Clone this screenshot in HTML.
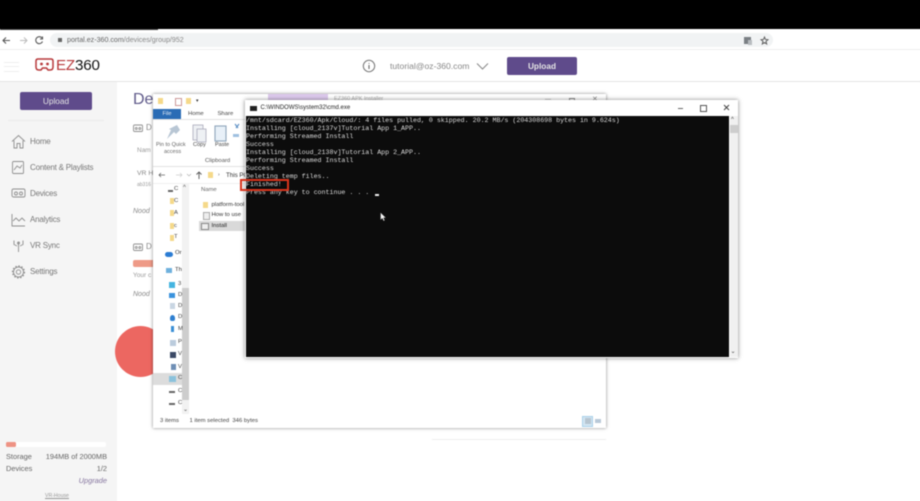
<!DOCTYPE html>
<html><head><meta charset="utf-8"><style>
html,body{margin:0;padding:0;background:#fff;overflow:hidden}
#w{position:relative;width:920px;height:501px;overflow:hidden}
#p{position:absolute;left:0;top:0;width:920px;height:501px;background:#fff;font-family:"Liberation Sans",sans-serif;filter:blur(.5px)}
#p div,#p span.a,#p svg{position:absolute}
.t{white-space:nowrap;line-height:1}
.nav{left:30px;font-size:8px;letter-spacing:-.2px;color:#787878}
.ic{fill:none;stroke:#909090;stroke-width:.9}
.cmd{left:246px;font:6.64px/8px "Liberation Mono",monospace;color:#dcdcdc;white-space:pre}
.ex{font-size:5.900px;color:#444;white-space:nowrap;line-height:1}
.f{background:#f5d98a;width:5px;height:6px}
</style></head><body><div id="w"><div id="p">
<div style="left:-6px;top:-6px;width:932px;height:35px;background:#000"></div>
<div style="left:0;top:29px;width:158px;height:1px;background:#444"></div>
<div style="left:-6px;top:33px;width:932px;height:16px;background:#fff"></div>
<div style="left:50px;top:33px;width:723px;height:14px;background:#f1f3f4;border-radius:7px"></div>
<div style="left:-6px;top:49px;width:932px;height:1px;background:#eee"></div>
<svg style="left:0;top:33px" width="50" height="15" class="ic"><path d="M10 7.500H3M6 4.500L3 7.500 6 10.500" stroke="#555" stroke-width="1.100" fill="none"/><path d="M20 7.500H27M24 4.500L27 7.500 24 10.500" stroke="#bbb" stroke-width="1" fill="none"/><path d="M42 5A3.500 3.500 0 1 0 42.500 8.500M42.500 3.500V6H40" stroke="#555" stroke-width="1.100" fill="none"/></svg>
<div style="left:58px;top:38px;width:3.500px;height:4px;background:#666"></div>
<div class="t" style="left:67px;top:36.500px;font-size:7.100px;color:#666">portal.ez-360.com<span style="color:#888">/devices/group/952</span></div>
<div style="left:744px;top:37px;width:7px;height:7px;background:#7a7f84"></div>
<div style="left:748px;top:40px;width:4px;height:5px;background:#b8bcc0"></div>
<svg style="left:760px;top:36px" width="9" height="9"><path d="M4.500 1L5.500 3.500 8 3.700 6 5.300 6.700 8 4.500 6.500 2.300 8 3 5.300 1 3.700 3.500 3.500Z" fill="none" stroke="#555" stroke-width=".9"/></svg>

<div style="left:-6px;top:81px;width:932px;height:1px;background:#e4e4e4"></div>
<div style="left:4px;top:62px;width:15px;height:8px;border-top:1px solid #eee;border-bottom:1px solid #eee"></div>
<div style="left:4px;top:66px;width:15px;height:1px;background:#eee"></div>
<svg style="left:35px;top:57px" width="19" height="17"><path d="M3 2H16Q18 2 18 4V10Q18 13 15 13H13L11.500 11H7.500L6 13H4Q1 13 1 10V4Q1 2 3 2Z" fill="none" stroke="#b7383a" stroke-width="1.500"/><circle cx="6.500" cy="7" r="1.400" fill="#b7383a"/><circle cx="12.500" cy="7" r="1.400" fill="#b7383a"/></svg>
<div class="t" style="left:56px;top:58px;font-size:15.200px;color:#b7383a;letter-spacing:-.2px">EZ<span style="color:#111">360</span></div>
<svg style="left:362px;top:59px" width="14" height="14"><circle cx="7" cy="7" r="5.700" fill="none" stroke="#777" stroke-width="1"/><path d="M7 4V4.800M7 6V10" stroke="#666" stroke-width="1.100"/></svg>
<div class="t" style="left:390px;top:62px;font-size:8.600px;color:#888">tutorial@oz-360.com</div>
<svg style="left:476px;top:62px" width="13" height="9"><path d="M1 1.500L6.500 7 12 1.500" fill="none" stroke="#888" stroke-width="1"/></svg>
<div class="t" style="left:507px;top:57px;width:70px;height:18px;line-height:18px;background:#5f4b8b;border-radius:2px;color:#e4e4e4;font-size:8.300px;text-align:center;font-weight:bold">Upload</div>

<div style="left:-6px;top:82px;width:123px;height:425px;background:#f5f5f5"></div>
<div class="t" style="left:20px;top:92px;width:72px;height:18px;line-height:18px;background:#5f4b8b;border-radius:2px;color:#e4e4e4;font-size:8.300px;text-align:center">Upload</div>
<div style="left:8px;top:120px;width:96px;height:1px;background:#eaeaea"></div>

<svg style="left:11px;top:134px" width="15" height="15" class="ic"><path d="M1 7.500L7.500 1.500 14 7.500M3 6.500V14H6V9.500H9V14H12V6.500"/></svg>
<div class="t nav" style="top:137.500px">Home</div>
<svg style="left:11px;top:160px" width="15" height="15" class="ic"><rect x="1.500" y="1.500" width="11" height="12" rx="1"/><path d="M3 10L6 6 9 8 11 5"/></svg>
<div class="t nav" style="top:163.500px">Content &amp; Playlists</div>
<svg style="left:11px;top:187px" width="15" height="13" class="ic"><rect x="1" y="2" width="13" height="8" rx="1.500"/><circle cx="5" cy="6.500" r="1.500"/><circle cx="10" cy="6.500" r="1.500"/></svg>
<div class="t nav" style="top:189.500px">Devices</div>
<svg style="left:11px;top:213px" width="15" height="14" class="ic"><path d="M1 1V13H14M2 8L5 5 8 8 11 5 14 8"/></svg>
<div class="t nav" style="top:215.500px">Analytics</div>
<svg style="left:12px;top:239px" width="14" height="14" class="ic"><path d="M6.500 5V13M2 1.500V5.500L5 7M11 1.500V5.500L8 7"/><circle cx="6.500" cy="4" r="1" fill="#999"/></svg>
<div class="t nav" style="top:241.500px">VR Sync</div>
<svg style="left:11px;top:265px" width="15" height="14" class="ic"><circle cx="7.500" cy="7" r="2.200"/><circle cx="7.500" cy="7" r="5"/><circle cx="7.500" cy="7" r="6" stroke-dasharray="1.500 1.600" stroke-width="1.200"/></svg>
<div class="t nav" style="top:267.500px">Settings</div>

<div style="left:6px;top:441.500px;width:100px;height:5px;background:#fff;border-radius:2px"></div>
<div style="left:6px;top:441.500px;width:10px;height:5px;background:#ee9384;border-radius:1.500px"></div>
<div class="t" style="left:6px;top:452.500px;font-size:7.400px;color:#666">Storage</div>
<div class="t" style="right:813px;top:452.500px;font-size:7.400px;color:#666">194MB of 2000MB</div>
<div class="t" style="left:6px;top:464.500px;font-size:7.400px;color:#666">Devices</div>
<div class="t" style="right:813px;top:464.500px;font-size:7.400px;color:#666">1/2</div>
<div class="t" style="right:813px;top:476.500px;font-size:7.400px;color:#84749e;font-style:italic">Upgrade</div>
<div class="t" style="left:45px;top:493.500px;font-size:5.200px;color:#999;text-decoration:underline">VR-House</div>

<div class="t" style="left:133px;top:92px;font-size:16px;color:#5f5a8a">De</div>
<svg style="left:133px;top:124px" width="10" height="9" class="ic"><rect x=".5" y="1" width="9" height="6.500" rx="1"/><circle cx="3.200" cy="4.500" r="1"/><circle cx="6.800" cy="4.500" r="1"/></svg>
<div class="t" style="left:146px;top:124px;font-size:8px;color:#888">D</div>
<div class="t" style="left:137px;top:148px;font-size:6.500px;color:#999">Nam</div>
<div class="t" style="left:137px;top:171px;font-size:6.800px;color:#888">VR H</div>
<div class="t" style="left:137px;top:183px;font-size:5px;color:#999">ab316</div>
<div class="t" style="left:133px;top:208px;font-size:7px;color:#888;font-style:italic">Nood</div>
<svg style="left:133px;top:243px" width="10" height="9" class="ic"><rect x=".5" y="1" width="9" height="6.500" rx="1"/><circle cx="3.200" cy="4.500" r="1"/><circle cx="6.800" cy="4.500" r="1"/></svg>
<div class="t" style="left:146px;top:243px;font-size:8px;color:#888">D</div>
<div style="left:133px;top:260px;width:22px;height:7px;background:#ee9a87;border-radius:2px"></div>
<div class="t" style="left:133px;top:272.500px;font-size:6.500px;color:#999">Your c</div>
<div class="t" style="left:133px;top:291px;font-size:7px;color:#888;font-style:italic">Nood</div>
<div style="left:115px;top:326px;width:51px;height:51px;border-radius:50%;background:#ec6761"></div>
<div style="left:432px;top:439px;width:174px;height:1px;background:#eee"></div>

<!-- Explorer -->
<div style="left:152.500px;top:93.500px;width:453px;height:334px;background:#fff;box-shadow:0 0 3px rgba(0,0,0,.5)"></div>
<div style="left:268px;top:94px;width:60px;height:10px;background:#dcc9ec"></div>
<div class="t" style="left:334px;top:97px;font-size:5.500px;color:#aaa">EZ360 APK Installer</div>
<div class="t" style="left:545px;top:97px;font-size:6px;color:#999">—</div>
<div style="left:569px;top:98px;width:4px;height:4px;border:.7px solid #888"></div>
<div class="t" style="left:592px;top:96px;font-size:7px;color:#888">✕</div>
<div class="f" style="left:158px;top:98px"></div>
<div style="left:175px;top:98px;width:5px;height:6px;border:.7px solid #c99;background:#fff"></div>
<div class="f" style="left:186px;top:98px"></div>
<div class="t" style="left:196px;top:99px;font-size:5px;color:#333">▾</div>
<div class="t" style="left:153px;top:109px;width:28px;height:10px;line-height:10px;background:#2a6cb5;color:#e8eef6;font-size:5.600px;text-align:center">File</div>
<div class="ex" style="left:188px;top:111.500px">Home</div>
<div class="ex" style="left:217.500px;top:111.500px">Share</div>
<div style="left:153px;top:119px;width:92px;height:1px;background:#e2e2e2"></div>
<svg style="left:164px;top:123px" width="80" height="24"><path d="M13 2L16 7 12 11 10 9 3 16 7 7 5 6Z" fill="#b8c6d4"/><rect x="29" y="2" width="10" height="15" fill="#eef1f4" stroke="#aab" stroke-width=".8"/><rect x="33" y="6" width="9" height="13" fill="#eef1f4" stroke="#aab" stroke-width=".8"/><rect x="51" y="3" width="11" height="15" fill="#e8f0f8" stroke="#8fa6bb" stroke-width="1.100"/><path d="M71 1L74 5M75 1L72 5" stroke="#5c8fc4" stroke-width="1.100"/><rect x="69" y="11" width="6" height="3" fill="#9fc0e0"/></svg>
<div class="ex" style="left:156px;top:143px;color:#666;font-size:5.500px">Pin to Quick</div>
<div class="ex" style="left:164px;top:150px;color:#666;font-size:5.500px">access</div>
<div class="ex" style="left:193px;top:143px;font-size:5.500px">Copy</div>
<div class="ex" style="left:215px;top:143px;font-size:5.500px">Paste</div>
<div class="ex" style="left:205px;top:158.500px;color:#555">Clipboard</div>
<div style="left:153px;top:166px;width:92px;height:1px;background:#e2e2e2"></div>
<svg style="left:156px;top:170px" width="50" height="10"><path d="M9 5H3M5 3L3 5 5 7" stroke="#666" stroke-width=".8" fill="none"/><path d="M20 5H26M24 3L26 5 24 7" stroke="#ccc" stroke-width=".7" fill="none"/><path d="M31 4L33 6 35 4" stroke="#aaa" stroke-width=".6" fill="none"/><path d="M43 9V2M40.500 4.500L43 2 45.500 4.500" stroke="#555" stroke-width=".9" fill="none"/></svg>
<div class="f" style="left:208px;top:172px"></div>
<div class="t" style="left:218px;top:173px;font-size:5px;color:#555">›</div>
<div class="t" style="left:226px;top:172.500px;font-size:6.200px;color:#333">This PC</div>
<div style="left:153px;top:183px;width:100px;height:0;border-top:1px solid #f0f0f0"></div>

<div style="left:182px;top:184px;width:7px;height:230px;background:#f2f2f2"></div>
<div style="left:182px;top:288px;width:7px;height:112px;background:#cdcdcd"></div>
<div class="t" style="left:183px;top:185px;font-size:6px;color:#555">^</div>
<div class="t" style="left:183px;top:407px;font-size:6px;color:#555">⌄</div>
<div style="left:153px;top:373px;width:29px;height:12px;background:#dcdcdc"></div>

<div class="ex" style="left:174px;top:187px">C</div><div class="ex" style="left:174px;top:199px">C</div>
<div class="ex" style="left:174px;top:211px">A</div><div class="ex" style="left:174px;top:224px">c</div><div class="ex" style="left:174px;top:235px">T</div>
<div style="left:168px;top:190px;width:5px;height:2px;background:#666"></div>
<div class="f" style="left:170px;top:198px;width:4px"></div><div class="f" style="left:170px;top:210px;width:4px"></div><div class="f" style="left:170px;top:223px;width:4px"></div><div class="f" style="left:170px;top:235px;width:4px"></div>
<div style="left:165px;top:252px;width:8px;height:5px;background:#2b7cd3;border-radius:3px"></div>
<div class="ex" style="left:175px;top:251px;color:#333">Or</div>
<div style="left:166px;top:268px;width:6px;height:5px;background:#6fb1dd"></div>
<div class="ex" style="left:175px;top:268px;color:#333">Th</div>
<div style="left:169px;top:282px;width:6px;height:6px;background:#45b4e0"></div><div class="ex" style="left:178px;top:282px">3</div>
<div style="left:169px;top:293px;width:6px;height:5px;background:#3b93dd"></div><div class="ex" style="left:178px;top:293px">D</div>
<div style="left:170px;top:303px;width:5px;height:6px;background:#c9d6e3"></div><div class="ex" style="left:178px;top:304px">D</div>
<div style="left:170px;top:315px;width:5px;height:6px;background:#2e7fd0;border-radius:50% 50% 2px 2px"></div><div class="ex" style="left:178px;top:315px">D</div>
<div style="left:171px;top:326px;width:3px;height:6px;background:#3a8fd6"></div><div class="ex" style="left:178px;top:327px">M</div>
<div style="left:170px;top:340px;width:6px;height:6px;background:#bcd"></div><div class="ex" style="left:178px;top:340px">P</div>
<div style="left:170px;top:352px;width:6px;height:6px;background:#3c4a66"></div><div class="ex" style="left:178px;top:352px">V</div>
<div style="left:171px;top:364px;width:5px;height:6px;background:#6f8fb5"></div><div class="ex" style="left:178px;top:365px">V</div>
<div style="left:169px;top:376px;width:7px;height:6px;background:#8bc2dc"></div><div class="ex" style="left:178px;top:376px">C</div>
<div style="left:169px;top:391px;width:6px;height:2px;background:#666"></div><div class="ex" style="left:178px;top:389px">C</div>
<div style="left:169px;top:403px;width:6px;height:2px;background:#666"></div><div class="ex" style="left:178px;top:401px">C</div>

<div class="ex" style="left:201px;top:187.500px;color:#666">Name</div>
<div class="f" style="left:203px;top:202px"></div>
<div class="ex" style="left:211.500px;top:202.500px;color:#333">platform-tool</div>
<div style="left:203px;top:212px;width:5px;height:6px;background:#eee;border:.5px solid #aaa"></div>
<div class="ex" style="left:211.500px;top:213px;color:#333">How to use</div>
<div style="left:199px;top:221px;width:46px;height:10px;background:#d9d9d9"></div>
<div style="left:201px;top:223px;width:6px;height:5px;background:#eee;border:.5px solid #888"></div>
<div class="ex" style="left:211.500px;top:223.500px;color:#222">Install</div>

<div class="ex" style="left:160px;top:418.500px">3 items</div>
<div class="ex" style="left:189.500px;top:418.500px">1 item selected&nbsp; 346 bytes</div>
<div style="left:582px;top:416px;width:9px;height:9px;background:#d3e6f3;border:1px solid #a8d0e8"></div>
<div style="left:585px;top:418px;width:6px;height:6px;background:#b7c5d0"></div>
<div style="left:595px;top:419px;width:6px;height:4px;background:#b9c9d8"></div>

<!-- cmd -->
<div style="left:245px;top:100px;width:493px;height:258px;background:#fff;box-shadow:0 0 4px rgba(0,0,0,.5)"></div>
<div style="left:250px;top:106px;width:7px;height:5px;background:#222"></div>
<div class="t" style="left:260.500px;top:105px;font-size:6px;color:#222">C:\WINDOWS\system32\cmd.exe</div>
<div style="left:678px;top:107.500px;width:5px;height:1px;background:#666"></div>
<div style="left:700px;top:105px;width:5px;height:5px;border:1px solid #555"></div>
<svg style="left:723px;top:104px" width="7" height="7"><path d="M1 1L6 6M6 1L1 6" stroke="#444" stroke-width="1"/></svg>
<div style="left:246px;top:116px;width:483px;height:241px;background:#0c0c0c"></div>
<div style="left:730px;top:116px;width:8px;height:241px;background:#f0f0f0"></div>
<div style="left:730px;top:125px;width:8px;height:8px;background:#cdcdcd"></div>
<div class="t" style="left:731px;top:117px;font-size:6px;color:#444">^</div>
<div class="t" style="left:730.500px;top:349px;font-size:6px;color:#444">⌄</div>
<div class="cmd" style="top:116px">/mnt/sdcard/EZ360/Apk/Cloud/: 4 files pulled, 0 skipped. 20.2 MB/s (204308698 bytes in 9.624s)
Installing [cloud_2137v]Tutorial App 1_APP..
Performing Streamed Install
Success
Installing [cloud_2138v]Tutorial App 2_APP..
Performing Streamed Install
Success
Deleting temp files..
Finished!
Press any key to continue . . . </div>
<div style="left:375px;top:194px;width:4px;height:2px;background:#eee"></div>
<div style="left:240px;top:179px;width:45px;height:8px;border:2px solid #d8341c"></div>
<svg style="left:380px;top:212px" width="7" height="10"><path d="M.5 .5V8L2.300 6.300 3.500 9 4.800 8.400 3.600 5.900H6Z" fill="#f6f6f6" stroke="#222" stroke-width=".4"/></svg>
</div></div></body></html>
